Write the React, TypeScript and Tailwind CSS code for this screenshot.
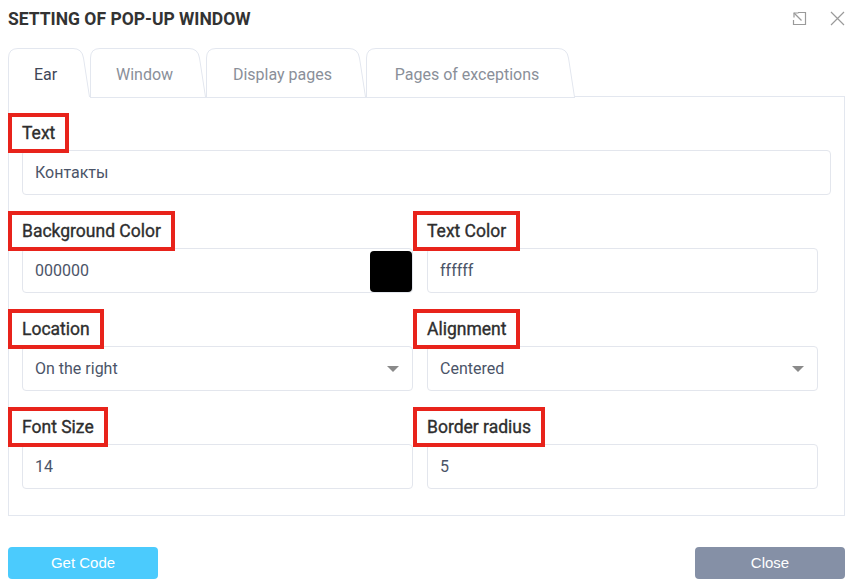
import React from 'react';

const tabs = [
  { label: 'Ear', width: 82, active: true },
  { label: 'Window', width: 116, active: false },
  { label: 'Display pages', width: 160, active: false },
  { label: 'Pages of exceptions', width: 209, active: false },
];

function TabShape({ width, active }: { width: number; active: boolean }) {
  const h = 49;
  const r = 10;
  const s = 7;
  const d = `M0.5,${h} L0.5,${r} Q0.5,0.5 ${r},0.5 L${width - s - r},0.5 Q${width - s - 1},0.5 ${width - s + 0.5},${r} L${width - 0.5},${h}`;
  return (
    <svg className="absolute inset-0" width={width} height={h + 1} viewBox={`0 0 ${width} ${h + 1}`}>
      <path d={d + ' Z'} fill="#ffffff" stroke="none" />
      <path d={d} fill="none" stroke="#e3e7ef" strokeWidth="1" />
      {!active && <line x1="0" y1={h + 0.5} x2={width} y2={h + 0.5} stroke="#e3e7ef" strokeWidth="1" />}
    </svg>
  );
}

function Label({ text }: { text: string }) {
  return (
    <div className="h-[37px]">
      <span className="relative z-10 -ml-[14px] inline-block h-[40px] border-[4px] border-[#e8231b] bg-white pl-[10px] pr-[10px] text-[17.5px] leading-[33px] text-[#2e2e2e] [-webkit-text-stroke:0.35px_#2e2e2e]">
        {text}
      </span>
    </div>
  );
}

function TextInput({ value, children }: { value: string; children?: React.ReactNode }) {
  return (
    <div className="relative flex h-[45px] items-center rounded-[4px] border border-[#e3e6ed] bg-white px-[12px] text-[16px] text-[#4b5468]">
      {value}
      {children}
    </div>
  );
}

function SelectInput({ value }: { value: string }) {
  return (
    <TextInput value={value}>
      <span className="absolute right-[13px] top-[19px] h-0 w-0 border-x-[6px] border-t-[6px] border-x-transparent border-t-[#8a8a8a]" />
    </TextInput>
  );
}

export default function App() {
  return (
    <div className="h-[584px] w-[851px] bg-white" style={{ fontFamily: 'Roboto, "Noto Sans", sans-serif' }}>
      {/* Header */}
      <div className="flex h-[48px] items-start justify-between pl-[8px] pr-[6px] pt-[8px]">
        <h1 className="text-[17.5px] font-bold leading-[22px] text-[#333]">SETTING OF POP-UP WINDOW</h1>
        <div className="flex items-center gap-[23px] pt-[3px]">
          <svg width="15" height="15" viewBox="0 0 15 15" fill="none" stroke="#9a9a9a" strokeWidth="1.2">
            <path d="M6 1.5 H13.5 V13.5 H1.5 V9" />
            <path d="M9.5 9.5 L2 2" />
            <path d="M2 6.5 V2 H6.5" />
          </svg>
          <svg width="15" height="15" viewBox="0 0 15 15" fill="none" stroke="#9a9a9a" strokeWidth="1.2">
            <path d="M1 1 L14 14 M14 1 L1 14" />
          </svg>
        </div>
      </div>

      {/* Tabs */}
      <div className="flex h-[49px] pl-[8px] pr-[6px]">
        {tabs.map((t) => (
          <div
            key={t.label}
            className={`relative flex h-[49px] shrink-0 items-center justify-center pr-[7px] text-[16px] ${t.active ? 'z-10 text-[#3f4757]' : 'text-[#8a8f99]'}`}
            style={{ width: t.width }}
          >
            <TabShape width={t.width} active={t.active} />
            <span className="relative pt-[4px]">{t.label}</span>
          </div>
        ))}
        <div className="flex-1 border-b border-[#e3e7ef]" />
      </div>

      {/* Panel */}
      <div className="mx-[8px] mr-[6px] h-[419px] border-x border-b border-[#e3e7ef] px-[13px] pt-[16px]">
        <div className="flex flex-col gap-[16px]">
          <div>
            <Label text="Text" />
            <TextInput value="Контакты" />
          </div>
          <div className="grid grid-cols-2 gap-x-[14px] pr-[13px]">
            <div>
              <Label text="Background Color" />
              <TextInput value="000000">
                <span className="absolute right-[0px] top-[2px] h-[41px] w-[42px] rounded-[4px] bg-black" />
              </TextInput>
            </div>
            <div>
              <Label text="Text Color" />
              <TextInput value="ffffff" />
            </div>
          </div>
          <div className="grid grid-cols-2 gap-x-[14px] pr-[13px]">
            <div>
              <Label text="Location" />
              <SelectInput value="On the right" />
            </div>
            <div>
              <Label text="Alignment" />
              <SelectInput value="Centered" />
            </div>
          </div>
          <div className="grid grid-cols-2 gap-x-[14px] pr-[13px]">
            <div>
              <Label text="Font Size" />
              <TextInput value="14" />
            </div>
            <div>
              <Label text="Border radius" />
              <TextInput value="5" />
            </div>
          </div>
        </div>
      </div>

      {/* Footer */}
      <div className="mt-[31px] flex justify-between pl-[8px] pr-[6px]" style={{ fontFamily: '"Liberation Sans", Arial, sans-serif' }}>
        <button className="h-[32px] w-[150px] rounded-[4px] bg-[#4bcbfd] text-[15px] text-white">Get Code</button>
        <button className="h-[32px] w-[150px] rounded-[4px] bg-[#8590a6] text-[15px] text-white">Close</button>
      </div>
    </div>
  );
}
